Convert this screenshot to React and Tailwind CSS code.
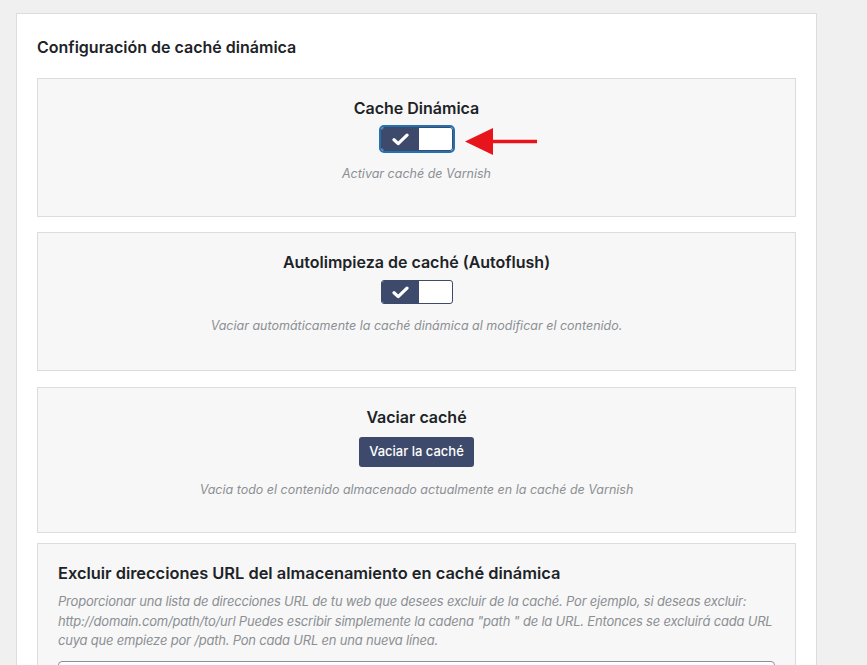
import React from 'react';

function Check() {
    return (
        <svg width="17" height="13" viewBox="0 0 17 13" fill="none">
            <path d="M2 6.8 L6.2 10.6 L15 2.2" stroke="white" strokeWidth="3.2" strokeLinecap="round" strokeLinejoin="round" />
        </svg>
    );
}

function Toggle({focused}) {
    return (
        <div className={"flex h-[24px] w-[72px] overflow-hidden rounded-[3px] border border-[#3e4a6b] bg-white " + (focused ? "mt-[9px] outline-2 outline-offset-0 outline-[#2271b1]" : "mt-[8px]")}>
            <div className="flex h-full w-[37px] items-center justify-center bg-[#3e4a6b]">
                <Check />
            </div>
        </div>
    );
}

function Section({title, children, desc, className, descGap = "mt-[13px]"}) {
    return (
        <div className={"flex flex-col items-center border border-[#dcdcde] bg-[#f7f7f7] pt-[19px] " + className}>
            <h3 className="text-[16px] font-semibold leading-[20px] text-[#1d2327]">{title}</h3>
            {children}
            <p className={descGap + " text-[12.5px] italic leading-[18px] text-[#8c8f94]"}>{desc}</p>
        </div>
    );
}

export default function App() {
    return (
        <div className="min-h-[665px] overflow-hidden bg-[#f0f0f1] pt-[13px] font-['Inter',sans-serif]">
            <div className="ml-[16px] w-[801px] border border-[#dcdcde] bg-white px-[20px] pt-[21px] pb-[40px]">
                <h2 className="text-[16px] font-semibold leading-[24px] text-[#1d2327]">Configuración de caché dinámica</h2>

                <div className="relative mt-[19px]">
                    <Section title="Cache Dinámica" desc="Activar caché de Varnish" descGap="mt-[14px]" className="h-[139px]">
                        <Toggle focused />
                    </Section>
                    <svg className="absolute left-[428px] top-[49px]" width="74" height="30" viewBox="0 0 74 30">
                        <path d="M0 14.5 L28 1 L28 12.7 L72 12.7 L72 16.3 L28 16.3 L28 28 Z" fill="#e8141b" />
                    </svg>
                </div>

                <Section title="Autolimpieza de caché (Autoflush)" desc="Vaciar automáticamente la caché dinámica al modificar el contenido." className="mt-[15px] pb-[35px]">
                    <Toggle />
                </Section>

                <Section title="Vaciar caché" desc="Vacia todo el contenido almacenado actualmente en la caché de Varnish" descGap="mt-[14px]" className="mt-[16px] pb-[33px]">
                    <button className="mt-[10px] h-[30px] rounded-[3px] bg-[#3e4a6b] px-[10px] text-[13px] font-medium text-white">Vaciar la caché</button>
                </Section>

                <div className="mt-[10px] border border-[#dcdcde] bg-[#f7f7f7] px-[20px] pt-[17px] pb-[20px]">
                    <h3 className="text-[16.4px] font-semibold leading-[24px] text-[#1d2327]">Excluir direcciones URL del almacenamiento en caché dinámica</h3>
                    <p className="mt-[7px] text-[13px] italic leading-[19.5px] tracking-[-0.2px] text-[#8c8f94]">
                        Proporcionar una lista de direcciones URL de tu web que desees excluir de la caché. Por ejemplo, si deseas excluir: http://domain.com/path/to/url Puedes escribir simplemente la cadena "path " de la URL. Entonces se excluirá cada URL cuya que empieze por /path. Pon cada URL en una nueva línea.
                    </p>
                    <textarea className="mt-[10px] block h-[120px] w-full resize-none rounded-[4px] border border-[#8c8f94] bg-white" />
                </div>
            </div>
        </div>
    );
}
